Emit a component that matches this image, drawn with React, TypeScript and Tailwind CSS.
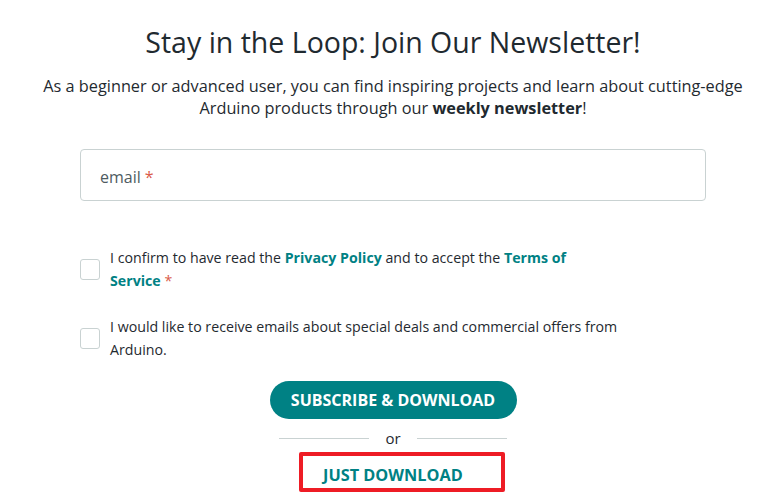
export default function App() {
  return (
    <div className="min-h-[494px] w-[763px] bg-white font-['Open_Sans',sans-serif] text-[#1f2a30]">
      <div className="pl-[23px]">
        <div className="flex w-[740px] flex-col items-center">
          <h1 className="mt-[22px] text-[28.5px] leading-[40px] font-normal">Stay in the Loop: Join Our Newsletter!</h1>
          <p className="mt-[13px] text-center text-[16.3px] leading-[22px]">
            As a beginner or advanced user, you can find inspiring projects and learn about cutting-edge
            <br />
            Arduino products through our <span className="font-bold">weekly newsletter</span>!
          </p>

          <div className="mt-[30px] flex h-[52px] w-[626px] items-center rounded-[4px] border border-[#c9d2d2] px-[19px] pt-[3px] text-[16px] text-[#4e5b61]">
            email <span className="ml-[4px] text-[#da5b4a]">*</span>
          </div>

          <div className="mt-[45px] w-[626px] text-[14.2px] leading-[23px]">
            <label className="flex items-center gap-[10px]">
              <span className="h-[21px] w-[20px] shrink-0 rounded-[3px] border border-[#c9d2d2]" />
              <span className="w-[470px]">
                I confirm to have read the <span className="font-bold text-[#008184]">Privacy Policy</span> and to accept the{" "}
                <span className="font-bold text-[#008184]">Terms of Service</span>{" "}
                <span className="text-[#da5b4a]">*</span>
              </span>
            </label>
            <label className="mt-[23px] flex items-center gap-[10px]">
              <span className="h-[21px] w-[20px] shrink-0 rounded-[3px] border border-[#c9d2d2]" />
              <span className="w-[520px]">
                I would like to receive emails about special deals and commercial offers from Arduino.
              </span>
            </label>
          </div>

          <button className="mt-[20px] flex h-[38px] w-[247px] items-center justify-center rounded-full bg-[#008184] text-[16px] font-bold text-white">
            SUBSCRIBE &amp; DOWNLOAD
          </button>

          <div className="mt-[8px] flex items-center gap-[16px] text-[15px] leading-[22px]">
            <span className="h-px w-[90px] bg-[#c9d2d2]" />
            <span>or</span>
            <span className="h-px w-[90px] bg-[#c9d2d2]" />
          </div>

          <button className="mt-[3px] ml-[18px] flex h-[40px] w-[206px] items-center justify-start rounded-[2px] border-[4px] border-[#ee1c25] pt-[6px] pl-[20px] text-[16.3px] font-bold text-[#008184]">
            JUST DOWNLOAD
          </button>
        </div>
      </div>
    </div>
  );
}
